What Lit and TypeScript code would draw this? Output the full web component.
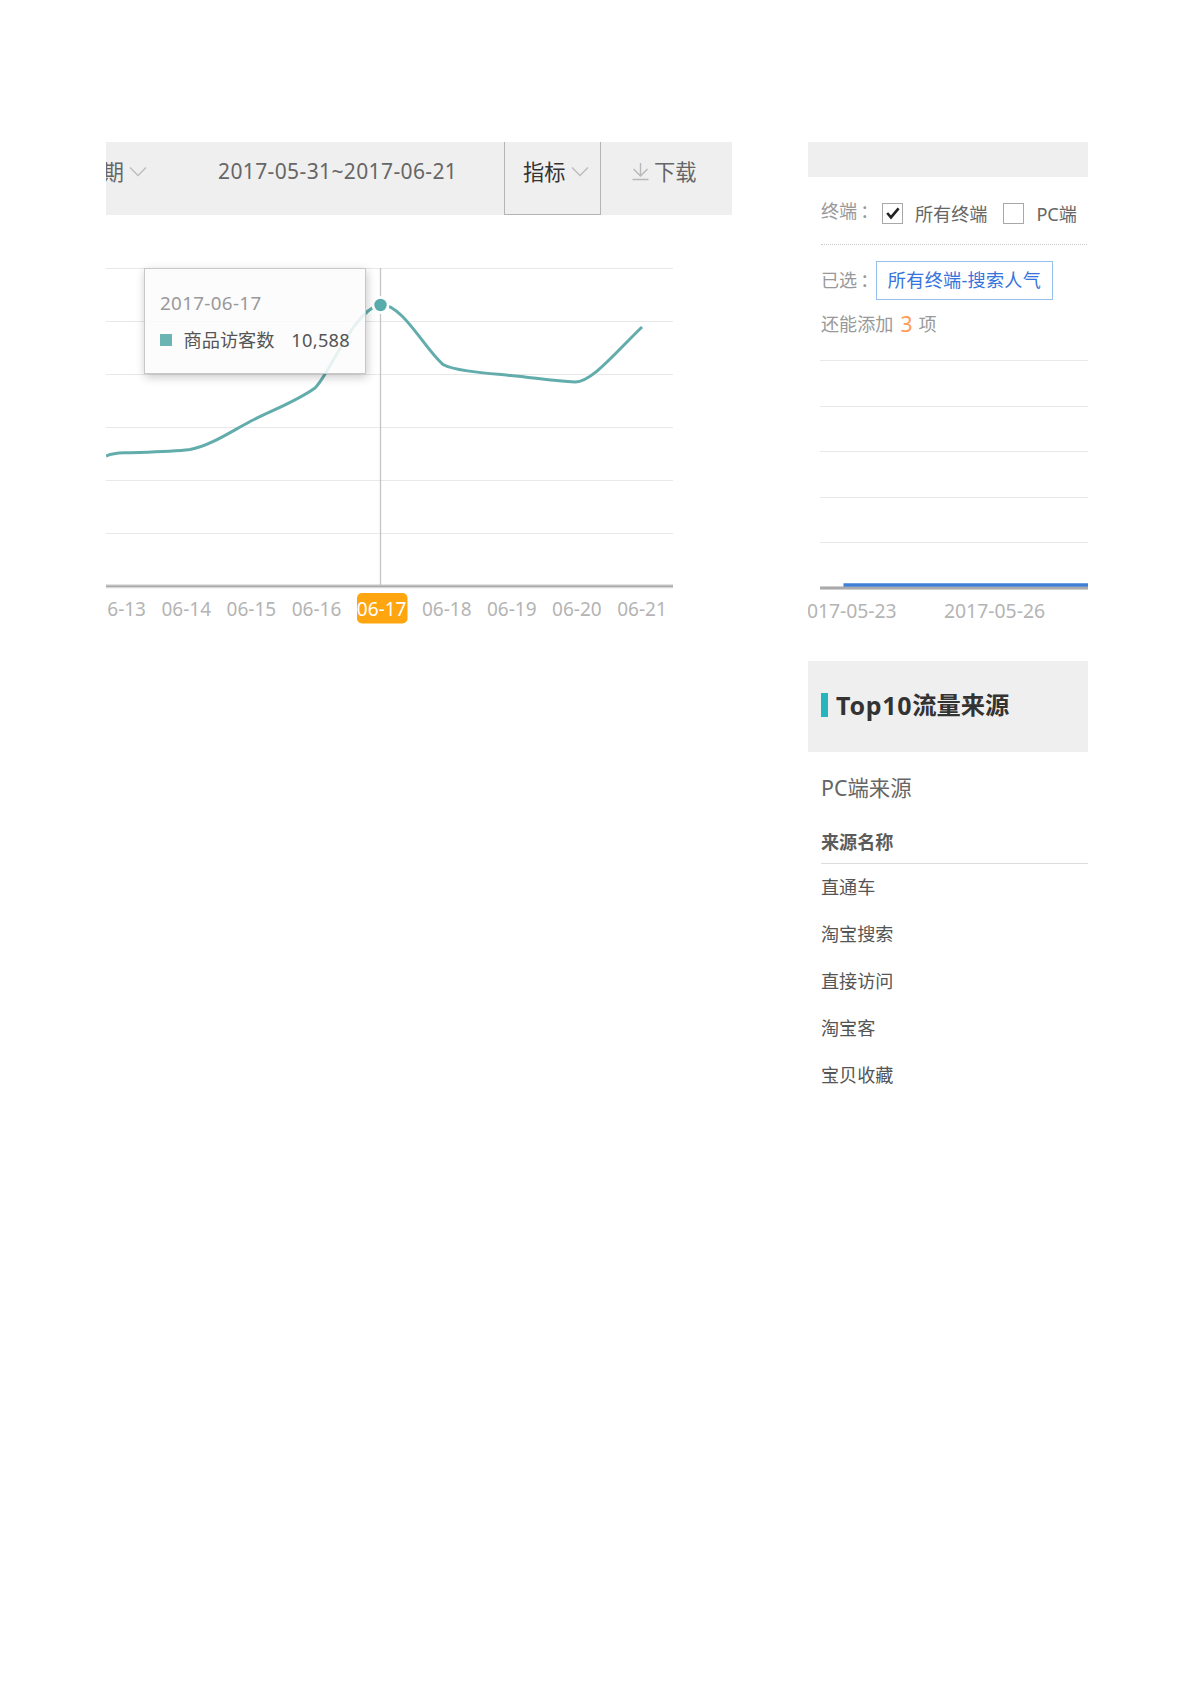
import { LitElement, html, css, svg } from "lit";
import { customElement } from "lit/decorators.js";

const DAYS = ["6-13", "06-14", "06-15", "06-16", "06-17", "06-18", "06-19", "06-20", "06-21"];
const ACTIVE_DAY = 4;
const SOURCES = ["直通车", "淘宝搜索", "直接访问", "淘宝客", "宝贝收藏"];

const base = css`
  :host {
    display: block;
    font-family: "Noto Sans", "Noto Sans CJK SC", sans-serif;
    color: #666;
  }
  * {
    box-sizing: border-box;
  }
  svg {
    display: block;
  }
  svg text {
    font-size: 19px;
    fill: #b4b4b4;
  }
`;

const chevron = html`<svg width="18" height="12" viewBox="0 0 18 12" fill="none" stroke="#bdbdbd" stroke-width="1.4">
  <path d="M1 1.5 9 9.5 17 1.5" />
</svg>`;

@customElement("visitor-trend")
export class VisitorTrend extends LitElement {
  static styles = [
    base,
    css`
      .bar {
        display: flex;
        height: 73px;
        background: #efefef;
        overflow: hidden;
        font-size: 21.2px;
        line-height: 30px;
      }
      .cell {
        display: flex;
        align-items: center;
        height: 60px;
      }
      .period {
        width: 112px;
        gap: 5px;
      }
      .clip {
        display: flex;
        justify-content: flex-end;
        width: 18px;
        overflow: hidden;
      }
      .range {
        width: 286px;
        letter-spacing: 0.38px;
        font-size: 21px;
        white-space: nowrap;
      }
      .range span {
        margin-top: -2px;
      }
      .metric {
        width: 97px;
        height: 73px;
        padding: 0 0 12px 18px;
        gap: 6px;
        border: solid #b4b4b4;
        border-width: 0 1px 1px;
        color: #333;
      }
      .download {
        padding-left: 31px;
        gap: 5px;
      }
      .chart {
        position: relative;
        margin-top: -1px;
      }
      .tip {
        position: absolute;
        left: 38px;
        top: 54px;
        width: 222px;
        height: 106px;
        padding: 21px 15px 0 15px;
        border: 1.5px solid #c8c8c8;
        background: rgba(252, 252, 252, 0.87);
        box-shadow: 1px 3px 9px rgba(0, 0, 0, 0.22);
        line-height: 26px;
        white-space: nowrap;
      }
      .day {
        font-size: 18.8px;
        letter-spacing: 0.35px;
        color: #999;
      }
      .entry {
        display: flex;
        align-items: center;
        margin-top: 11px;
        font-size: 18.2px;
        color: #555;
      }
      .swatch {
        width: 12px;
        height: 12px;
        margin-right: 11.5px;
        background: #6ab5b4;
      }
      .count {
        margin-left: auto;
        letter-spacing: 0.3px;
      }
      .active {
        fill: #fff;
      }
    `,
  ];

  render() {
    return html`
      <div class="bar">
        <div class="cell period"><span class="clip"><span>期</span></span>${chevron}</div>
        <div class="cell range"><span>2017-05-31~2017-06-21</span></div>
        <div class="cell metric"><span>指标</span>${chevron}</div>
        <div class="cell download">
          <svg width="17" height="18" viewBox="0 0 17 18" fill="none" stroke="#b8b8b8" stroke-width="1.4">
            <path d="M8.5 0V13M1.5 6 8.5 13 15.5 6M0.5 16.5H16.5" />
          </svg>
          <span>下载</span>
        </div>
      </div>
      <div class="chart">
        <svg width="626" height="426" viewBox="106 214 626 426">
          ${[268.5, 321.5, 374.5, 427.5, 480.5, 533.5].map(
            (y) => svg`<path d="M106 ${y}H673" stroke="#e8e8e8" />`
          )}
          <path d="M106 586.3H673" stroke="#d8d8d8" stroke-width="4" />
          <path d="M106 586.3H673" stroke="#aaa" stroke-width="1.6" />
          <path d="M380.5 268V586" stroke="#c4c4c4" stroke-width="1.3" />
          <path
            d="M106 456C112 453.6 118 453 124 452.8C150 452 170 452 190 449.5C210 446 232 431 251 421C275 409 297 401 315 388C330 374 352 312 380.5 304C404 306 423 347 443 364.5C455 371 485 373 511 375.5C533 377.5 555 381.5 575 382C592 382 615 353 642 327"
            fill="none" stroke="#62adac" stroke-width="3" />
          <circle cx="380.5" cy="305" r="9" fill="#fff" />
          <circle cx="380.5" cy="305" r="6.2" fill="#58acab" />
          <rect x="357" y="593" width="50.5" height="30.5" rx="5" fill="#ffa50f" />
          ${DAYS.map(
            (d, i) => svg`<text class=${i === ACTIVE_DAY ? "active" : ""} x=${146 + i * 65.1}
              y="616" text-anchor="end">${d}</text>`
          )}
        </svg>
        <div class="tip">
          <div class="day">2017-06-17</div>
          <div class="entry"><i class="swatch"></i><span>商品访客数</span><span class="count">10,588</span></div>
        </div>
      </div>
    `;
  }
}

@customElement("source-panel")
export class SourcePanel extends LitElement {
  static styles = [
    base,
    css`
      :host {
        font-size: 18.1px;
        line-height: 26px;
        white-space: nowrap;
        overflow: hidden;
      }
      svg text {
        font-size: 19.4px;
      }
      .strip {
        height: 35px;
        background: #efefef;
      }
      .filters {
        padding-left: 13px;
      }
      .row {
        display: flex;
        align-items: center;
        color: #999;
      }
      .terminals {
        height: 68px;
        margin-right: 1px;
        padding-top: 6px;
        border-bottom: 1.5px dotted #ccc;
        color: #666;
      }
      .label {
        width: 61px;
        margin-top: -5px;
        color: #999;
      }
      .colon {
        margin-left: 3px;
      }
      .box {
        display: flex;
        align-items: center;
        justify-content: center;
        width: 21px;
        height: 21px;
        margin-right: 12px;
        border: 1.5px solid #a8a8a8;
      }
      .name {
        margin-right: 16px;
      }
      .selected {
        height: 40px;
        margin-top: 15px;
      }
      .picked {
        width: 55px;
      }
      .tag {
        width: 177px;
        height: 39px;
        border: 1.5px solid #94c0f0;
        line-height: 36px;
        text-align: center;
        letter-spacing: 0.3px;
        color: #3574dc;
      }
      .left {
        height: 30px;
        margin-top: 9px;
      }
      .num {
        margin: 0 6px 0 7px;
        font-size: 21px;
        color: #ff9a55;
      }
      .heading {
        display: flex;
        align-items: center;
        height: 91px;
        padding: 0 0 4px 13px;
        background: #efefef;
        color: #333;
        font-size: 24.3px;
        font-weight: 700;
      }
      .latin {
        font-size: 25px;
        letter-spacing: 0.7px;
      }
      .mark {
        width: 7px;
        height: 24px;
        margin-right: 8px;
        background: #26b5bd;
      }
      .table {
        padding-left: 13px;
      }
      .sub {
        height: 71px;
        font-size: 21.4px;
        line-height: 71px;
      }
      .th {
        height: 41px;
        border-bottom: 1px solid #ddd;
        font-weight: 700;
        line-height: 39px;
        color: #5c5c5c;
      }
      .td {
        height: 47px;
        line-height: 47px;
        color: #555;
      }
    `,
  ];

  render() {
    return html`
      <div class="strip"></div>
      <div class="filters">
        <div class="row terminals">
          <span class="label">终端<span class="colon">：</span></span>
          <span class="box">
            <svg width="14" height="13" viewBox="0 0 14 13" fill="none" stroke="#222" stroke-width="2.6">
              <path d="M1.2 6 5 10.4 12.6 1.4" />
            </svg>
          </span>
          <span class="name">所有终端</span>
          <span class="box"></span>
          <span>PC端</span>
        </div>
        <div class="row selected">
          <span class="picked">已选<span class="colon">：</span></span>
          <span class="tag">所有终端-搜索人气</span>
        </div>
        <div class="row left"><span>还能添加</span><span class="num">3</span><span>项</span></div>
      </div>
      <svg width="280" height="322" viewBox="808 339 280 322">
        ${[360.5, 406.5, 451.5, 497.5, 542.5].map((y) => svg`<path d="M820 ${y}H1088" stroke="#e8e8e8" />`)}
        <path d="M820 588H1088" stroke="#d0d0d0" stroke-width="4" />
        <path d="M820 588H1088" stroke="#aaa" stroke-width="2" />
        <path d="M843.5 585H1088" stroke="#3f7fd6" stroke-width="3.4" />
        <text x="896.5" y="617.5" text-anchor="end" textLength="89.5">017-05-23</text>
        <text x="994.5" y="617.5" text-anchor="middle">2017-05-26</text>
      </svg>
      <div class="heading"><i class="mark"></i><span class="latin">Top10</span><span>流量来源</span></div>
      <div class="table">
        <div class="sub">PC端来源</div>
        <div class="th">来源名称</div>
        ${SOURCES.map((s) => html`<div class="td">${s}</div>`)}
      </div>
    `;
  }
}

@customElement("app-root")
export class AppRoot extends LitElement {
  static styles = css`
    :host {
      display: block;
      background: #fff;
    }
    .page {
      display: grid;
      grid-template-columns: 626px 280px;
      column-gap: 76px;
      align-items: start;
      box-sizing: border-box;
      width: 1200px;
      height: 1698px;
      padding: 142px 0 0 106px;
    }
  `;

  render() {
    return html`<main class="page">
      <visitor-trend></visitor-trend>
      <source-panel></source-panel>
    </main>`;
  }
}
